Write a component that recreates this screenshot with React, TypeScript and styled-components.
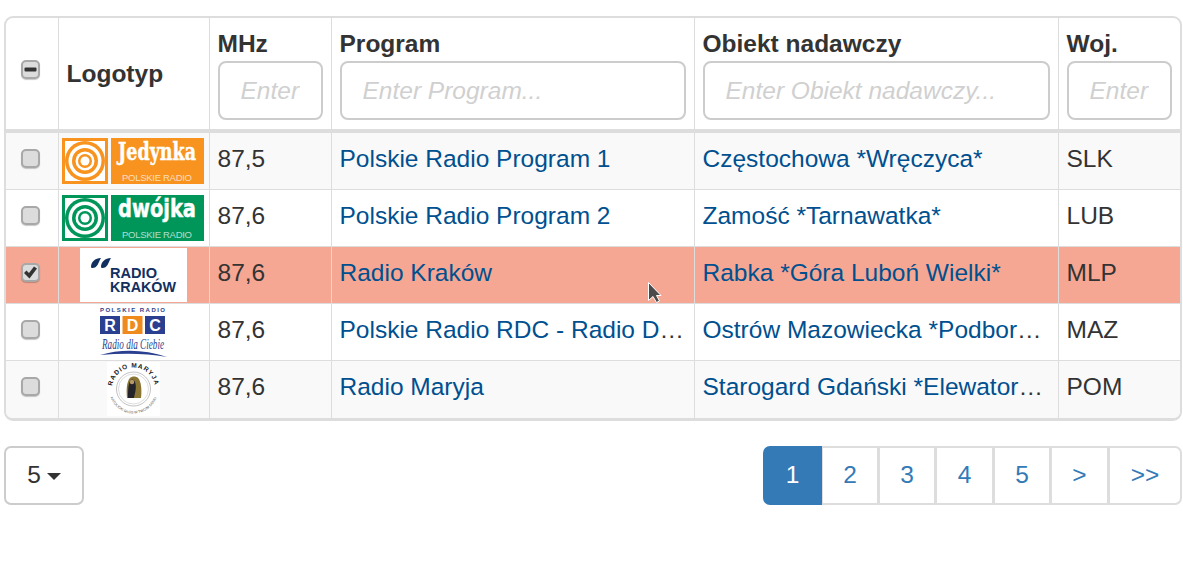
import React from "react";
import styled, { createGlobalStyle } from "styled-components";

const GlobalStyle = createGlobalStyle`
  html, body { margin: 0; padding: 0; background: #fff; }
  body { font-family: "Liberation Sans", Arial, sans-serif; font-size: 24.5px; color: #333; }
`;

const Page = styled.div`
  position: relative;
  width: 1183px;
  height: 574px;
  overflow: hidden;
  padding: 16px 1px 0 4px;
  box-sizing: border-box;
`;

const TableFrame = styled.div`
  border: 2px solid #ddd;
  border-bottom-width: 3px;
  border-radius: 9px;
  overflow: hidden;
  width: 1178px;
  box-sizing: border-box;
`;

const Table = styled.table`
  width: 1174px;
  table-layout: fixed;
  border-collapse: collapse;
  border-style: hidden;
`;

const HeadCell = styled.th`
  padding: 12px 8px 9px;
  box-sizing: border-box;
  text-align: left;
  vertical-align: top;
  font-size: 24.5px;
  line-height: 27px;
  font-weight: 700;
  color: #333;
  border: 1px solid #ddd;
  border-bottom: 4px solid #ddd;
`;

const LabelHeadCell = styled(HeadCell)`
  vertical-align: middle;
  padding: 0 8px;
`;

const CheckHeadCell = styled(HeadCell)`
  vertical-align: middle;
  text-align: center;
  padding: 0 3px 12px 0;
`;

const FilterInput = styled.input`
  display: block;
  width: 100%;
  height: 59px;
  margin-top: 4px;
  padding: 0 21px;
  box-sizing: border-box;
  border: 2px solid #ccc;
  border-radius: 8px;
  background: #fff;
  outline: none;
  font-family: "Liberation Sans", Arial, sans-serif;
  font-size: 24.5px;
  &::placeholder {
    color: #d0d0d0;
    font-style: italic;
    opacity: 1;
  }
`;

const Row = styled.tr<{ $striped?: boolean; $selected?: boolean }>`
  background: ${(p) => (p.$selected ? "#f5a793" : p.$striped ? "#f9f9f9" : "#fff")};
`;

const Cell = styled.td`
  height: 57px;
  padding: 0 8px 5px;
  box-sizing: border-box;
  border: 1px solid #ddd;
  font-size: 24.5px;
  line-height: 27px;
  white-space: nowrap;
  overflow: hidden;
  text-overflow: ellipsis;
`;

const CheckCell = styled(Cell)`
  padding: 0 3px 10px 0;
  text-align: center;
`;

const LogoCell = styled(Cell)`
  padding: 0;
`;

const LogoWrap = styled.div`
  display: flex;
  justify-content: center;
  align-items: center;
  height: 56px;
  svg { display: block; }
`;

const LinkText = styled.a`
  color: #00508f;
  text-decoration: none;
`;

const Check = styled.span`
  display: inline-flex;
  align-items: center;
  justify-content: center;
  width: 19px;
  height: 19px;
  box-sizing: border-box;
  vertical-align: middle;
  border: 2px solid #a8a8a8;
  border-radius: 5px;
  background: #dcdcdc;
  box-shadow: 0 1px 1px rgba(0, 0, 0, 0.22);
`;

const Footer = styled.div`
  display: flex;
  justify-content: space-between;
  align-items: flex-start;
  margin-top: 25px;
  width: 1178px;
`;

const SizeButton = styled.button`
  display: flex;
  align-items: center;
  justify-content: center;
  gap: 6px;
  width: 80px;
  height: 59px;
  padding: 0;
  background: #fff;
  border: 2px solid #ccc;
  border-radius: 7px;
  color: #333;
  font-family: inherit;
  font-size: 24.5px;
`;

const Caret = styled.span`
  width: 0;
  height: 0;
  margin-top: 2px;
  border-left: 7px solid transparent;
  border-right: 7px solid transparent;
  border-top: 7px solid #333;
`;

const Pager = styled.div`
  display: flex;
  height: 59px;
`;

const PageButton = styled.a<{ $active?: boolean; $w: number }>`
  display: flex;
  align-items: center;
  justify-content: center;
  width: ${(p) => p.$w}px;
  box-sizing: border-box;
  margin-left: -2px;
  font-size: 24.5px;
  color: ${(p) => (p.$active ? "#fff" : "#337ab7")};
  background: ${(p) => (p.$active ? "#337ab7" : "#fff")};
  border: 2px solid ${(p) => (p.$active ? "#337ab7" : "#ddd")};
  border-left-width: ${(p) => (p.$active ? 2 : 3)}px;
  position: relative;
  z-index: ${(p) => (p.$active ? 1 : 0)};
  &:first-child { border-radius: 7px 0 0 7px; margin-left: 0; }
  &:last-child { border-radius: 0 7px 7px 0; }
`;

const Pointer = styled.svg`
  position: absolute;
  left: 647px;
  top: 281px;
`;

const Rings = ({ color }: { color: string }) => (
  <>
    <rect x="0" y="0" width="46" height="46" fill={color} />
    <rect x="3" y="3" width="40" height="40" fill="#fff" />
    <circle cx="23" cy="23" r="20" fill={color} />
    <circle cx="23" cy="23" r="16.500" fill="#fff" />
    <circle cx="23" cy="23" r="13" fill={color} />
    <circle cx="23" cy="23" r="9.500" fill="#fff" />
    <circle cx="23" cy="23" r="7" fill={color} />
    <circle cx="23" cy="23" r="4.500" fill="#fff" />
  </>
);

const BrandLogo = ({ color, name, family }: { color: string; name: string; family: string }) => (
  <svg width="143" height="47" viewBox="0 0 143 47">
    <Rings color={color} />
    <rect x="49" y="0" width="93" height="46" fill={color} />
    <text
      x="56"
      y="22"
      fill="#fff"
      stroke="#fff"
      strokeWidth="0.5"
      fontFamily={family}
      fontWeight="700"
      fontSize="25"
      textLength="78"
      lengthAdjust="spacingAndGlyphs"
    >
      {name}
    </text>
    <text x="95" y="43" textAnchor="middle" fill="#fff" fillOpacity="0.7" fontFamily="Liberation Sans" fontSize="9.5" textLength="70">
      POLSKIE RADIO
    </text>
  </svg>
);

const KrakowLogo = () => (
  <svg width="107" height="54" viewBox="0 0 107 54">
    <rect width="107" height="54" fill="#fff" />
    <path d="M11 19c0-5 4-9 10-9-2 3-3 8-6 9.500-2 .8-4 .5-4-.5zM21 19c0-5 4-9 10-9-2 3-3 8-6 9.500-2 .8-4 .5-4-.5z" fill="#12305f" />
    <text x="30" y="30" fill="#12305f" fontFamily="Liberation Sans" fontWeight="700" fontSize="14.5" textLength="47" lengthAdjust="spacingAndGlyphs">RADIO</text>
    <text x="30" y="44" fill="#12305f" fontFamily="Liberation Sans" fontWeight="700" fontSize="14.5" textLength="66" lengthAdjust="spacingAndGlyphs">KRAKÓW</text>
  </svg>
);

const RdcLogo = () => (
  <svg width="70" height="52" viewBox="0 0 70 52">
    <text x="33.500" y="6" textAnchor="middle" fill="#2a3f8f" fontFamily="Liberation Sans" fontWeight="700" fontSize="6" textLength="65">POLSKIE RADIO</text>
    <rect x="1" y="10" width="20" height="18" fill="#2a3f8f" />
    <rect x="23.500" y="10" width="20" height="18" fill="#ef8a1f" />
    <rect x="46" y="10" width="20" height="18" fill="#2a3f8f" />
    <text x="11" y="25" textAnchor="middle" fill="#fff" fontFamily="Liberation Sans" fontWeight="700" fontSize="16">R</text>
    <text x="33.500" y="25" textAnchor="middle" fill="#fff" fontFamily="Liberation Sans" fontWeight="700" fontSize="16">D</text>
    <text x="56" y="25" textAnchor="middle" fill="#fff" fontFamily="Liberation Sans" fontWeight="700" fontSize="16">C</text>
    <text x="34" y="43" textAnchor="middle" fill="#2a3f8f" fontFamily="Liberation Serif" fontStyle="italic" fontSize="14" textLength="62" lengthAdjust="spacingAndGlyphs">Radio dla Ciebie</text>
    <path d="M1 49c20-6 44-6 67 2-22-4-44-4-67-2z" fill="#2a3f8f" />
  </svg>
);

const MaryjaLogo = () => (
  <svg width="53" height="54" viewBox="0 0 53 54">
    <rect width="53" height="54" fill="#fff" />
    <defs>
      <path id="arcTop" d="M5 27a21.500 21.500 0 0 1 43 0" />
      <path id="arcBottom" d="M2 27a24.500 24.500 0 0 0 49 0" />
    </defs>
    <text fill="#222" textAnchor="middle" fontFamily="Liberation Sans" fontWeight="700" fontSize="6.5" letterSpacing="0.9">
      <textPath href="#arcTop" startOffset="50%">RADIO MARYJA</textPath>
    </text>
    <text fill="#555" textAnchor="middle" fontFamily="Liberation Sans" fontSize="3.6">
      <textPath href="#arcBottom" startOffset="50%">KATOLICKI GŁOS W TWOIM DOMU</textPath>
    </text>
    <circle cx="26.500" cy="27" r="17" fill="none" stroke="#999" strokeWidth="0.6" />
    <circle cx="26.500" cy="27" r="15" fill="none" stroke="#bbb" strokeWidth="0.5" />
    <path d="M20 36c-1-9 0-17 3-20 2-2 6-2 8 0 3 3 4 11 3 20z" fill="#8a7434" />
    <path d="M21 36c0-7 0-15 3-18 2-1 3 0 4 2 2 5 0 11-1 16z" fill="#25232a" />
    <circle cx="25" cy="20" r="2.2" fill="#b79a6c" />
  </svg>
);

type Station = { mhz: string; program: string; site: string; woj: string; logo: React.ReactNode; selected?: boolean };

const stations: Station[] = [
  { mhz: "87,5", program: "Polskie Radio Program 1", site: "Częstochowa *Wręczyca*", woj: "SLK", logo: <BrandLogo color="#f7931e" name="Jedynka" family="DejaVu Serif" /> },
  { mhz: "87,6", program: "Polskie Radio Program 2", site: "Zamość *Tarnawatka*", woj: "LUB", logo: <BrandLogo color="#00965a" name="dwójka" family="DejaVu Sans" /> },
  { mhz: "87,6", program: "Radio Kraków", site: "Rabka *Góra Luboń Wielki*", woj: "MLP", logo: <KrakowLogo />, selected: true },
  { mhz: "87,6", program: "Polskie Radio RDC - Radio Dla Ciebie", site: "Ostrów Mazowiecka *Podborze*", woj: "MAZ", logo: <RdcLogo /> },
  { mhz: "87,6", program: "Radio Maryja", site: "Starogard Gdański *Elewator PZZ*", woj: "POM", logo: <MaryjaLogo /> },
];

const pages: [string, number][] = [["1", 59], ["2", 59], ["3", 59], ["4", 60], ["5", 59], [">", 60], [">>", 75]];

export default function App() {
  return (
    <Page>
      <GlobalStyle />
      <TableFrame>
        <Table>
          <colgroup>
            <col style={{ width: 52 }} />
            <col style={{ width: 151 }} />
            <col style={{ width: 122 }} />
            <col style={{ width: 363 }} />
            <col style={{ width: 364 }} />
            <col />
          </colgroup>
          <thead>
            <tr>
              <CheckHeadCell>
                <Check>
                  <svg width="13" height="13" viewBox="0 0 13 13"><rect x="0.500" y="4.500" width="12" height="4" rx="1" fill="#333" /></svg>
                </Check>
              </CheckHeadCell>
              <LabelHeadCell>Logotyp</LabelHeadCell>
              <HeadCell>MHz<FilterInput placeholder="Enter MHz..." /></HeadCell>
              <HeadCell>Program<FilterInput placeholder="Enter Program..." /></HeadCell>
              <HeadCell>Obiekt nadawczy<FilterInput placeholder="Enter Obiekt nadawczy..." /></HeadCell>
              <HeadCell>Woj.<FilterInput placeholder="Enter Woj..." /></HeadCell>
            </tr>
          </thead>
          <tbody>
            {stations.map((s, i) => (
              <Row key={i} $striped={i % 2 === 0} $selected={s.selected}>
                <CheckCell>
                  <Check>
                    {s.selected && (
                      <svg width="15" height="15" viewBox="0 0 15 15"><path d="M1 8l2.500-2.500 2.500 2.500 5-6.500 3 2-7.500 10z" fill="#333" /></svg>
                    )}
                  </Check>
                </CheckCell>
                <LogoCell><LogoWrap>{s.logo}</LogoWrap></LogoCell>
                <Cell>{s.mhz}</Cell>
                <Cell><LinkText>{s.program}</LinkText></Cell>
                <Cell><LinkText>{s.site}</LinkText></Cell>
                <Cell>{s.woj}</Cell>
              </Row>
            ))}
          </tbody>
        </Table>
      </TableFrame>
      <Footer>
        <SizeButton>5<Caret /></SizeButton>
        <Pager>
          {pages.map(([label, w], i) => (
            <PageButton key={label} $w={w} $active={i === 0}>{label}</PageButton>
          ))}
        </Pager>
      </Footer>
      <Pointer width="16" height="24" viewBox="0 0 16 24">
        <path d="M1.500 1.500v18l4.500-4 3.500 6 3-1.500-3-5.500h4.500z" fill="#4a4a4a" stroke="#fff" strokeWidth="1" />
      </Pointer>
    </Page>
  );
}
